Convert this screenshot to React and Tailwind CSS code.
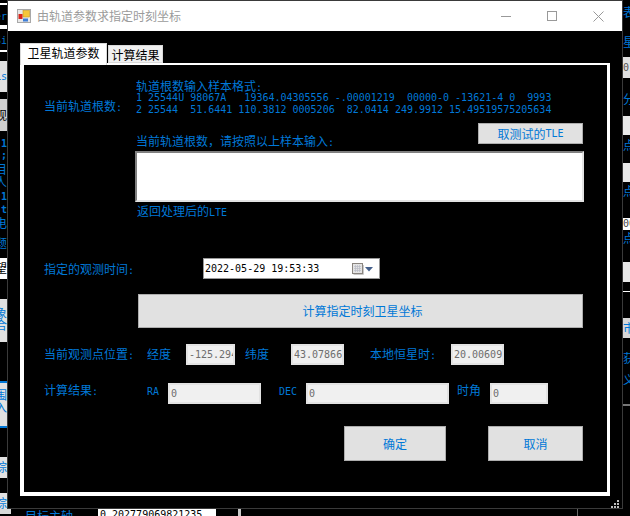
import React from "react";

const cjk = "font-['Noto_Sans_CJK_SC','Noto_Sans',sans-serif] text-[12px] leading-[12px]";
const mono = "font-['DejaVu_Sans_Mono',monospace] text-[10px] leading-[12px]";
const blue = "text-[#0078d7]";

function Latin({ children }) {
  return <span className={mono}>{children}</span>;
}

function Label({ className = "", children }) {
  return <div className={`${cjk} ${blue} h-[12px] whitespace-nowrap shrink-0 ${className}`}>{children}</div>;
}

function WinButton({ className = "", children }) {
  return (
    <button className={`flex items-center justify-center shrink-0 bg-[#e1e1e1] border border-[#adadad] ${cjk} ${blue} ${className}`}>
      {children}
    </button>
  );
}

function Field({ value, className = "" }) {
  return (
    <input
      readOnly
      value={value}
      className={`shrink-0 h-[21px] min-w-0 bg-[#f0f0f0] border-2 border-[#e3e3e3] pl-[1px] outline-none text-[#6d6d6d] ${mono} ${className}`}
    />
  );
}

function Frag({ className = "", children }) {
  return (
    <div className={`shrink-0 overflow-hidden whitespace-nowrap ${className}`}>{children}</div>
  );
}

function LeftStrip() {
  const text = `${cjk} ${blue}`;
  return (
    <div className="w-[7px] shrink-0 flex flex-col overflow-hidden">
      <Frag className="mt-[3px] h-[2px] bg-white" />
      <Frag className={`mt-[6px] h-[12px] ${mono} ${blue} [direction:rtl]`}>er</Frag>
      <Frag className="mt-[2px] h-[4px] bg-white" />
      <Frag className={`mt-[6px] h-[12px] ${mono} ${blue} [direction:rtl]`}>Si</Frag>
      <Frag className="mt-[3px] h-[2px] bg-white" />
      <Frag className={`mt-[9px] h-[31px] bg-[#e1e1e1] pt-[10px] ${mono} ${blue} [direction:rtl]`}>Ls</Frag>
      <Frag className={`mt-[7px] h-[32px] bg-[#d0d0d0] pt-[10px] ${cjk} text-black [direction:rtl]`}>观</Frag>
      <Frag className={`mt-[7px] h-[12px] ${mono} ${blue} font-bold [direction:rtl]`}>1</Frag>
      <Frag className={`h-[13px] ${mono} ${blue} font-bold [direction:rtl]`}>;</Frag>
      <Frag className={`h-[13px] ${text} [direction:rtl]`}>目</Frag>
      <Frag className={`h-[13px] ${text} [direction:rtl]`}>人</Frag>
      <Frag className={`mt-[2px] h-[13px] ${mono} ${blue} font-bold [direction:rtl]`}>1</Frag>
      <Frag className={`h-[13px] ${mono} ${blue} font-bold [direction:rtl]`}>t</Frag>
      <Frag className={`h-[14px] ${text} [direction:rtl]`}>电</Frag>
      <Frag className={`mt-[6px] h-[14px] ${text} [direction:rtl]`}>题</Frag>
      <Frag className={`mt-[7px] h-[21px] bg-white pt-[4px] ${cjk} text-black [direction:rtl]`}>望</Frag>
      <Frag className={`mt-[20px] h-[43px] bg-[#e1e1e1] pt-[8px] ${text} [direction:rtl] whitespace-normal`}>
        象<br />合
      </Frag>
      <Frag className={`mt-[39px] h-[47px] bg-[#e1e1e1] border-y-2 border-[#0078d7] pt-[6px] ${text} [direction:rtl]`}>
        围<br />入
      </Frag>
      <Frag className={`mt-[29px] h-[21px] bg-[#e1e1e1] pt-[4px] ${text} [direction:rtl]`}>综</Frag>
      <Frag className={`mt-[15px] h-[20px] bg-[#e1e1e1] pt-[4px] ${text} [direction:rtl]`}>综</Frag>
    </div>
  );
}

function RightStrip() {
  const text = `${cjk} ${blue}`;
  return (
    <div className="w-[7px] shrink-0 flex flex-col overflow-hidden">
      <Frag className={`mt-[6px] h-[14px] ${text}`}>表</Frag>
      <Frag className={`mt-[16px] h-[14px] ${text}`}>星</Frag>
      <Frag className={`mt-[7px] h-[21px] bg-[#e1e1e1] pt-[5px] ${mono} text-[#555]`}>01</Frag>
      <Frag className={`mt-[15px] h-[14px] ${text}`}>分</Frag>
      <Frag className="mt-[9px] h-[19px] bg-[#e8e8e8]" />
      <Frag className={`mt-[4px] h-[14px] ${text}`}>点</Frag>
      <Frag className="mt-[10px] h-[19px] bg-[#e8e8e8]" />
      <Frag className={`mt-[3px] h-[13px] ${text}`}>点</Frag>
      <Frag className={`mt-[20px] h-[12px] bg-white ${mono} text-[#444]`}>00</Frag>
      <Frag className={`mt-[2px] h-[14px] ${text}`}>点</Frag>
      <Frag className="mt-[16px] h-[20px] bg-[#e8e8e8]" />
      <Frag className="mt-[9px] h-px bg-white" />
      <Frag className={`mt-[26px] h-[20px] bg-[#d8d8d8] pt-[4px] ${text}`}>市</Frag>
      <Frag className={`mt-[14px] h-[12px] ${text}`}>获</Frag>
      <Frag className={`mt-[10px] h-[12px] ${text}`}>义</Frag>
      <Frag className="mt-[18px] h-[2px] bg-[#777]" />
    </div>
  );
}

function TitleBar() {
  return (
    <div className="h-[30px] bg-white flex items-center shrink-0">
      <svg width="14" height="14" viewBox="0 0 14 14" className="ml-[9px] mt-[-1px] shrink-0">
        <rect x="0.5" y="0.5" width="13" height="13" fill="#e8e8e8" stroke="#a8a8a8" />
        <rect x="6" y="1.5" width="6.5" height="6.5" fill="#f5c63a" stroke="#c79a1e" strokeWidth="0.6" />
        <rect x="1.5" y="5" width="4" height="5" fill="#d8261c" />
        <rect x="6" y="9.5" width="5" height="3" fill="#3f7fd8" />
      </svg>
      <span className={`ml-[6px] ${cjk} text-[#9b9b9b]`}>由轨道参数求指定时刻坐标</span>
      <div className="ml-auto flex items-center">
        <svg width="10" height="10" viewBox="0 0 10 10" className="mr-[36px]">
          <path d="M0 5.5H10" stroke="#999" />
        </svg>
        <svg width="10" height="10" viewBox="0 0 10 10" className="mr-[36px]">
          <rect x="0.5" y="0.5" width="9" height="9" fill="none" stroke="#999" />
        </svg>
        <svg width="11" height="11" viewBox="0 0 11 11" className="mr-[18px]">
          <path d="M0.5 0.5L10.5 10.5M10.5 0.5L0.5 10.5" stroke="#999" />
        </svg>
      </div>
    </div>
  );
}

function Tabs() {
  return (
    <div className="flex items-start h-[20px] relative z-10">
      <div className={`w-[87px] h-[22px] bg-white flex items-center justify-center pb-[3px] border border-[#d9d9d9] border-b-0 ${cjk} text-black`}>
        卫星轨道参数
      </div>
      <div className={`ml-px mt-[2px] w-[55px] h-[18px] bg-[#f0f0f0] flex items-center justify-center pt-[1px] border border-[#d9d9d9] ${cjk} text-black`}>
        计算结果
      </div>
    </div>
  );
}

function CalendarIcon() {
  return (
    <svg width="21" height="12" viewBox="0 0 21 12" className="shrink-0">
      <rect x="0.5" y="0.5" width="10" height="10" fill="#e4e4e4" stroke="#8a8580" />
      <path d="M2 3.5H9M2 5.5H9M2 7.5H9M3.5 2V9M5.5 2V9M7.5 2V9" stroke="#b9bcc6" strokeWidth="0.7" />
      <path d="M1.5 11.5H11.5V2" fill="none" stroke="#c9c9c9" />
      <path d="M13 4H21L17 8.5Z" fill="#44608c" />
    </svg>
  );
}

function TleSection() {
  return (
    <div className="flex">
      <Label className="w-[92px] mt-[19px]">
        当前轨道根数<Latin>:</Latin>
      </Label>
      <div className="flex-1 min-w-0 flex flex-col">
        <Label className="mt-[-1px]">
          轨道根数输入样本格式<Latin>:</Latin>
        </Label>
        <pre className={`${mono} ${blue} whitespace-pre`}>
          {"1 25544U 98067A   19364.04305556 -.00001219  00000-0 -13621-4 0  9993\n2 25544  51.6441 110.3812 0005206  82.0414 249.9912 15.49519575205634"}
        </pre>
        <div className="mt-[7px] h-[28px] flex items-start justify-between">
          <Label className="mt-[12px]">
            {"当前轨道根数\uFF0C请按照以上样本输入"}<Latin>:</Latin>
          </Label>
          <WinButton className="w-[105px] h-[21px]">
            取测试的<Latin>TLE</Latin>
          </WinButton>
        </div>
        <div className="ml-[-1px] mr-[-1px] h-[51px] bg-white border-2 border-t-[#808080] border-l-[#808080] border-r-[#e3e3e3] border-b-[#e3e3e3]" />
        <Label className="ml-px mt-[3px]">
          返回处理后的<Latin>LTE</Latin>
        </Label>
      </div>
    </div>
  );
}

function Panel() {
  return (
    <div className="h-[433px] border-t-2 border-l-4 border-r-[3px] border-b-4 border-white bg-black pl-[20px] pr-[24px] pt-[16px] flex flex-col">
      <TleSection />

      <div className="mt-[41px] h-[21px] flex items-center">
        <Label className="w-[159px]">
          指定的观测时间<Latin>:</Latin>
        </Label>
        <div className="w-[177px] h-[21px] bg-white border border-[#999] flex items-center pl-[1px] pr-[6px]">
          <span className={`${mono} text-black`}>2022-05-29 19:53:33</span>
          <span className="ml-auto">
            <CalendarIcon />
          </span>
        </div>
      </div>

      <WinButton className="mt-[15px] ml-[94px] h-[34px] pl-[4px]">计算指定时刻卫星坐标</WinButton>

      <div className="mt-[16px] h-[21px] flex items-center">
        <Label className="w-[103px] mb-[2px]">
          当前观测点位置<Latin>:</Latin>
        </Label>
        <Label className="w-[39px] mb-[2px]">经度</Label>
        <Field value="-125.2945" className="w-[49px]" />
        <Label className="ml-[10px] w-[46px] mb-[2px]">纬度</Label>
        <Field value="43.07866" className="w-[53px]" />
        <Label className="ml-[26px] w-[81px] mb-[2px]">
          本地恒星时<Latin>:</Latin>
        </Label>
        <Field value="20.00609" className="w-[53px]" />
      </div>

      <div className="mt-[18px] h-[21px] flex items-center">
        <Label className="w-[103px] mb-[8px]">
          计算结果<Latin>:</Latin>
        </Label>
        <Label className="w-[21px] mb-[8px]">
          <Latin>RA</Latin>
        </Label>
        <Field value="0" className="w-[93px]" />
        <Label className="ml-[18px] w-[27px] mb-[8px]">
          <Latin>DEC</Latin>
        </Label>
        <Field value="0" className="w-[143px]" />
        <Label className="ml-[8px] w-[33px] mb-[8px]">时角</Label>
        <Field value="0" className="w-[58px]" />
      </div>

      <div className="mt-[22px] flex justify-end gap-[42px]">
        <WinButton className="w-[102px] h-[35px]">确定</WinButton>
        <WinButton className="w-[95px] h-[35px]">取消</WinButton>
      </div>
    </div>
  );
}

function Grip() {
  return (
    <svg width="8" height="8" viewBox="0 0 8 8" className="absolute right-[3px] bottom-0">
      <path d="M6 0h2v2H6zM3 3h2v2H3zM6 3h2v2H6zM0 6h2v2H0zM3 6h2v2H3zM6 6h2v2H6z" fill="#bdbdbd" />
    </svg>
  );
}

function BottomStrip() {
  return (
    <div className="h-[7px] flex overflow-hidden">
      <div className="w-[11px] h-[5px] bg-[#d8d8d8] shrink-0" />
      <span className={`ml-[14px] w-[73px] shrink-0 mt-[1px] ${cjk} ${blue}`}>目标主轴</span>
      <div className={`w-[118px] h-[7px] bg-white shrink-0 pl-[2px] ${mono} text-black`}>0.202779069821235</div>
      <div className="ml-[22px] w-[3px] h-[7px] bg-[#c8c8c8] shrink-0" />
      <div className="ml-[336px] w-px h-[7px] bg-[#666] shrink-0" />
    </div>
  );
}

export default function App() {
  return (
    <div className="w-[630px] h-[516px] bg-black overflow-hidden">
      <div className="h-[509px] flex">
        <LeftStrip />
        <div className="relative w-[616px] shrink-0 border border-[#3a3a3a] bg-black flex flex-col">
          <TitleBar />
          <div className="pt-[12px] pl-[12px] pr-[12px]">
            <Tabs />
            <Panel />
          </div>
          <Grip />
        </div>
        <RightStrip />
      </div>
      <BottomStrip />
    </div>
  );
}
